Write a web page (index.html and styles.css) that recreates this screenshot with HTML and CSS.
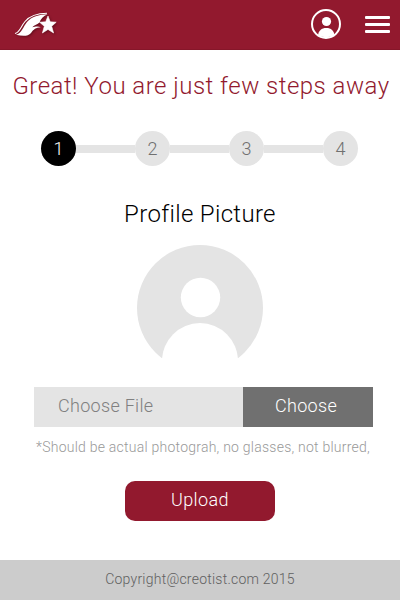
FILE: index.html
```html
<!DOCTYPE html>
<html lang="en">
<head>
<meta charset="utf-8">
<title>Profile Picture</title>
<link rel="stylesheet" href="styles.css">
</head>
<body>
<header class="topbar">
  <svg class="logo" width="50" height="30" viewBox="12 10 50 30" fill="#fff">
    <path d="M15 33.600C20 32 20.500 27 25 21.500C30 15.500 37 13.200 47 13.200" fill="none" stroke="#fff" stroke-width="1.100"/>
    <path d="M16 34.800C22 33 23 27 27 22C31.500 16.500 39 14.600 47.500 14.200C43.500 16 40.500 19 39.500 22.500C37.500 24.500 34.500 25 32.300 27.200C34.500 27 37.500 25.600 40.800 27.300C36 27.500 33.500 29.500 31 33C28 36.600 22.500 36.200 16 34.800Z"/>
    <path d="M48 16L50.200 21.800L56.200 22.200L51.700 26.300L53.600 33L48 29.400L42.400 33L44.300 26.300L39.600 22.200L45.700 21.800Z" stroke="#fff" stroke-width=".6" stroke-linejoin="round"/>
  </svg>
  <div class="actions">
    <svg width="30" height="30" viewBox="0 0 30 30">
      <circle cx="15" cy="15" r="14" fill="none" stroke="#fff" stroke-width="2"/>
      <circle cx="15.500" cy="12.500" r="4.600" fill="#fff"/>
      <path d="M7 26.500C7.500 21.500 10.500 19 15.300 19S23 21.500 23.500 26.500Q15 30 7 26.500Z" fill="#fff"/>
    </svg>
    <div class="menu"><i></i><i></i><i></i></div>
  </div>
</header>
<main>
  <h1>Great! You are just few steps away</h1>
  <div class="steps">
    <span class="step active">1</span><b></b><span class="step">2</span><b></b><span class="step">3</span><b></b><span class="step">4</span>
  </div>
  <h2>Profile Picture</h2>
  <svg class="avatar" width="126" height="113" viewBox="0 0 126 113">
    <circle cx="63" cy="63" r="63" fill="#e4e4e4"/>
    <circle cx="63.500" cy="52.500" r="19.700" fill="#fff"/>
    <ellipse cx="63" cy="116" rx="38" ry="38" fill="#fff"/>
  </svg>
  <div class="file"><span class="name">Choose File</span><span class="choose">Choose</span></div>
  <p class="note">*Should be actual photograh, no glasses, not blurred,</p>
  <button class="upload">Upload</button>
</main>
<footer><span>Copyright@creotist.com 2015</span></footer>
</body>
</html>
```

FILE: styles.css
```css
* { box-sizing: border-box; }
body {
  margin: 0;
  width: 400px;
  height: 600px;
  display: flex;
  flex-direction: column;
  font-family: Roboto, sans-serif;
  font-weight: 300;
  background: #fff;
  white-space: nowrap;
  overflow: hidden;
}
.topbar {
  height: 50px;
  background: #92192e;
  display: flex;
  justify-content: space-between;
  padding: 9px 10px 0 12px;
  border-bottom: 1px solid #861629;
}
.logo { margin-top: 1px; filter: drop-shadow(1px 1px 1px rgba(50, 0, 10, .5)); }
.actions { display: flex; gap: 24px; }
.menu { display: flex; flex-direction: column; gap: 4px; padding-top: 7px; }
.menu i { width: 25px; height: 3px; border-radius: 1px; background: #fff; }
main { flex: 1; display: flex; flex-direction: column; align-items: center; }
h1, h2, p { margin: 0; font-weight: 300; }
h1 {
  margin: 21px 0 0 2px;
  font-size: 24px;
  line-height: 30px;
  letter-spacing: .48px;
  color: #92192e;
}
.steps {
  margin: 30px 1px 0 0;
  display: flex;
  align-items: center;
}
.steps b { width: 59px; height: 8px; background: #e4e4e4; }
.step {
  width: 35px;
  height: 35px;
  border-radius: 50%;
  background: #e4e4e4;
  color: #707070;
  font-size: 18px;
  line-height: 35px;
  text-align: center;
}
.active { background: #000; color: #fff; }
h2 { margin-top: 33px; font-size: 24px; line-height: 30px; letter-spacing: .33px; color: #000; }
.avatar { margin-top: 16px; }
.file {
  margin: 29px 0 0 7px;
  width: 339px;
  height: 40px;
  display: flex;
  font-size: 18px;
  line-height: 37px;
  letter-spacing: .3px;
}
.name { width: 209px; padding-left: 24px; background: #e4e4e4; color: #808080; }
.choose { flex: 1; padding-left: 32px; background: #707070; color: #fff; }
.note { margin: 10px 0 0 6px; font-size: 14px; line-height: 20px; letter-spacing: .24px; color: #999; }
.upload {
  margin-top: 24px;
  width: 150px;
  height: 40px;
  padding: 0 0 3px;
  border: 0;
  border-radius: 10px;
  background: #92192e;
  color: #fff;
  font: 300 18px/37px Roboto, sans-serif;
  letter-spacing: .4px;
}
footer {
  height: 40px;
  background: #ccc;
  color: #606060;
  font-size: 14px;
  line-height: 38px;
  letter-spacing: .23px;
  text-align: center;
}
```
